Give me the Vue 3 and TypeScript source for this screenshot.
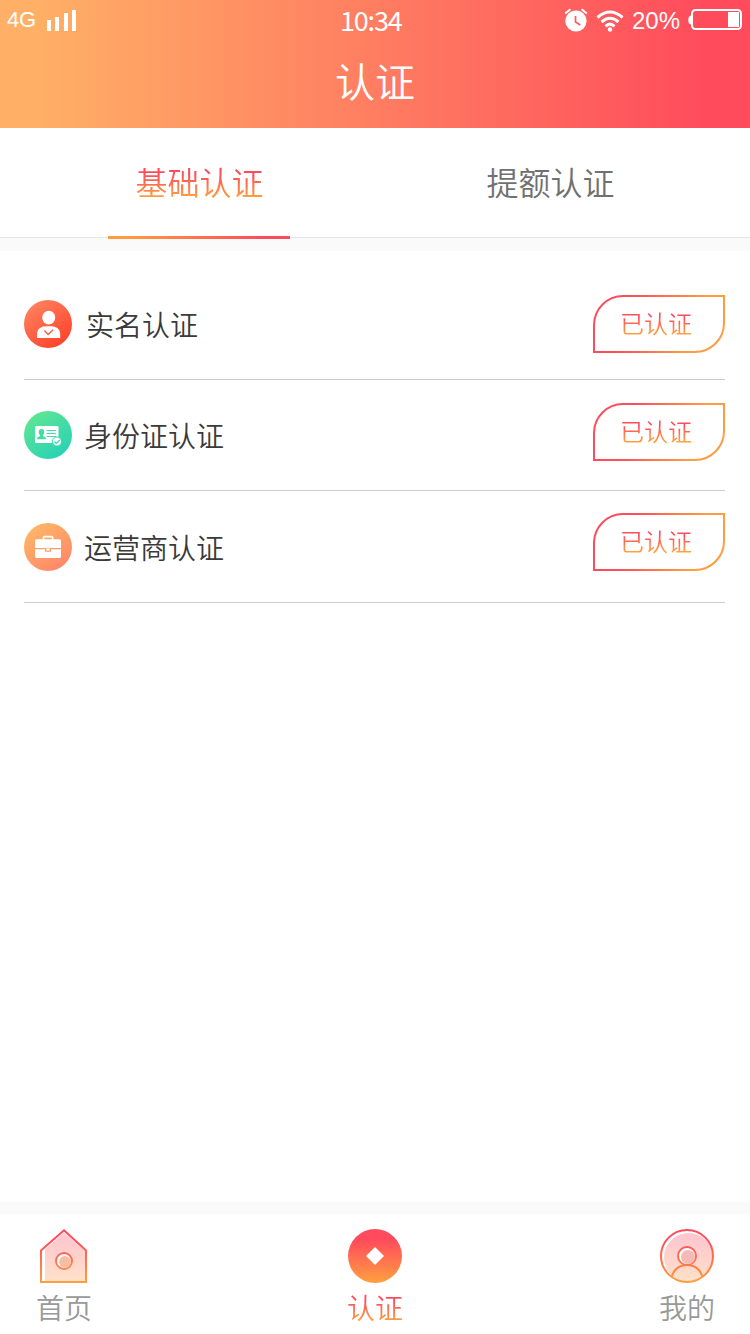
<script setup lang="ts">
interface Tab { label: string; active: boolean }
interface Item { kind: 'person' | 'card' | 'case'; label: string; status: string }

const tabs: Tab[] = [
  { label: '基础认证', active: true },
  { label: '提额认证', active: false },
]
const items: Item[] = [
  { kind: 'person', label: '实名认证', status: '已认证' },
  { kind: 'card', label: '身份证认证', status: '已认证' },
  { kind: 'case', label: '运营商认证', status: '已认证' },
]
</script>

<template>
  <div class="screen">
    <svg class="defs" width="0" height="0" aria-hidden="true">
      <defs>
        <linearGradient id="warm" x1="0" y1="0" x2="0" y2="54" gradientUnits="userSpaceOnUse">
          <stop offset="0.2" stop-color="#ff4b5c" /><stop offset="1" stop-color="#ffa03f" />
        </linearGradient>
        <linearGradient id="pale" x1="0" y1="0" x2="0" y2="54" gradientUnits="userSpaceOnUse">
          <stop offset="0.2" stop-color="#ffc8cf" /><stop offset="1" stop-color="#ffe2c8" />
        </linearGradient>
        <linearGradient id="outline" x1="0" y1="0" x2="1" y2="0.15">
          <stop offset="0.3" stop-color="#ff4b5c" /><stop offset="0.85" stop-color="#ff9c40" />
        </linearGradient>
        <linearGradient id="red" x1="0" y1="0" x2="0.7" y2="1">
          <stop offset="0" stop-color="#ff8a65" /><stop offset="1" stop-color="#ff432c" />
        </linearGradient>
        <linearGradient id="green" x1="0.1" y1="0" x2="0.8" y2="1">
          <stop offset="0" stop-color="#63e790" /><stop offset="1" stop-color="#25d1b7" />
        </linearGradient>
        <linearGradient id="orange" x1="0.1" y1="0" x2="0.8" y2="1">
          <stop offset="0" stop-color="#ffbb67" /><stop offset="1" stop-color="#ff8568" />
        </linearGradient>
      </defs>
    </svg>

    <header class="header">
      <div class="status">
        <span class="net">4G</span>
        <svg class="signal" width="30" height="22" viewBox="0 0 30 22" fill="#fff">
          <path d="M0 10h4v11H0zM8 7h4v14H8zM17 3h4v18h-4zM25 0h4v21h-4z" />
        </svg>
        <span class="time">10:34</span>
        <svg class="alarm" width="24" height="24" viewBox="0 0 24 24" fill="none">
          <circle cx="12" cy="13" r="10.6" fill="#fff" />
          <path d="M1.2 5.6 6.4 1.3M17.600 1.300 22.800 5.600" stroke="#fff" stroke-width="2" />
          <path d="M11.500 8v6l4.800 3" stroke="#ff5b5d" stroke-width="1.700" />
        </svg>
        <svg class="wifi" width="28" height="24" viewBox="0 0 28 24" fill="none" stroke="#fff" stroke-width="3">
          <path d="M1.500 8.500Q14-2.500 26.500 8.500M5.600 13Q14 5.600 22.400 13M9.500 17.300Q14 13 18.500 17.300" />
          <circle cx="14" cy="20.500" r="2.200" fill="#fff" stroke="none" />
        </svg>
        <span class="percent">20%</span>
        <svg class="battery" width="54" height="22" viewBox="0 0 54 22">
          <rect x="4" y="1" width="49" height="19" rx="3.500" fill="none" stroke="#fff" stroke-width="2" />
          <path d="M3.500 6.500Q.3 6.500.3 11t3.200 4.500z" fill="#fff" />
          <rect x="40" y="3" width="11" height="15" fill="#fff" />
        </svg>
      </div>
      <h1 class="title">认证</h1>
    </header>

    <nav class="tabs">
      <div v-for="tab in tabs" :key="tab.label" class="tab" :class="{ active: tab.active }">
        <span class="tab-label">{{ tab.label }}</span>
      </div>
    </nav>
    <div class="band top-band"></div>

    <main class="list">
      <div v-for="item in items" :key="item.kind" class="row" :class="item.kind">
        <svg class="icon" width="48" height="48" viewBox="0 0 48 48">
          <template v-if="item.kind === 'person'">
            <circle cx="24" cy="24" r="24" fill="url(#red)" />
            <ellipse cx="24.700" cy="17.700" rx="6.500" ry="6.900" fill="#fff" />
            <path d="M13 38v-4c0-5 4-7.800 8.500-7.800h6c4.700 0 8.700 2.800 8.700 7.800v4z" fill="#fff" />
            <path d="m20.300 30.500 3.800 4 5-4.700" fill="none" stroke="#ff5c40" stroke-width="1.400" />
          </template>
          <template v-else-if="item.kind === 'card'">
            <circle cx="24" cy="24" r="24" fill="url(#green)" />
            <rect x="11" y="15" width="23.500" height="17" rx="1.200" fill="#fff" />
            <path d="M17.500 18c3.600 0 3.200 4.800 1.500 6.300v1c1.800.3 3 1 3 2.900h-9c0-1.900 1.200-2.600 3-2.900v-1c-1.700-1.500-2.100-6.300 1.500-6.300z" fill="#45dca1" />
            <path d="M22.500 19.500H32M22.500 22.500H32M22.500 25.500H32" stroke="#45dca1" stroke-width="1.100" />
            <circle cx="33" cy="30.500" r="4.500" fill="#fff" stroke="#36d7ae" stroke-width="1" />
            <path d="m30.500 30.500 1.800 1.800 3.500-3.500" fill="none" stroke="#36d7ae" stroke-width="1.200" />
          </template>
          <template v-else>
            <circle cx="24" cy="24" r="24" fill="url(#orange)" />
            <path d="M19.500 17v-2.500q0-.8.800-.8h7.500q.8 0 .8.800V17" fill="none" stroke="#fff" stroke-width="1.700" />
            <path d="M12.500 16.300h23q1.500 0 1.500 1.500V25H11v-7.200q0-1.500 1.500-1.500zM11 26.200h10v2.500h6v-2.500h10v7.300q0 1.500-1.500 1.500h-23q-1.500 0-1.500-1.500z" fill="#fff" />
            <path d="M22.300 25.500h3.400v2h-3.400z" fill="#fff" />
          </template>
        </svg>
        <span class="name">{{ item.label }}</span>
        <div class="badge">
          <svg class="shape" width="132" height="58" viewBox="0 0 132 58">
            <path d="M1 57V30A29 29 0 0 1 30 1H131V28A29 29 0 0 1 102 57Z" fill="none" stroke="url(#outline)" stroke-width="2" />
          </svg>
          <span class="badge-text">{{ item.status }}</span>
        </div>
      </div>
    </main>

    <div class="band"></div>
    <footer class="bottom">
      <div class="nav home">
        <svg width="54" height="54" viewBox="0 0 54 54">
          <path d="M8 52V20.500L27 3.500l21 18.700V52z" fill="url(#pale)" />
          <path d="M4 53V21.500L27 1.300l22 20.200V53z" fill="none" stroke="url(#warm)" stroke-width="2" />
          <circle cx="27" cy="32" r="8" fill="#fff" stroke="url(#warm)" stroke-width="2" />
          <circle cx="28" cy="33" r="6" fill="#f6bda3" />
        </svg>
        <span class="nav-label">首页</span>
      </div>
      <div class="nav current">
        <svg width="54" height="54" viewBox="0 0 54 54">
          <circle cx="27" cy="27" r="27" fill="url(#warm)" />
          <path d="m27 18 9 9-9 9-9-9z" fill="#fff" />
        </svg>
        <span class="nav-label">认证</span>
      </div>
      <div class="nav mine">
        <svg width="54" height="54" viewBox="0 0 54 54">
          <circle cx="28.500" cy="28.500" r="24.500" fill="url(#pale)" />
          <circle cx="27" cy="27" r="26" fill="none" stroke="url(#warm)" stroke-width="2" />
          <circle cx="27" cy="27" r="9" fill="#fff" stroke="url(#warm)" stroke-width="2" />
          <circle cx="28" cy="28" r="7" fill="#f4bab8" />
          <path d="M11.500 48C14 40 20 36 27 36s13 4 15.500 12" fill="none" stroke="url(#warm)" stroke-width="2" />
        </svg>
        <span class="nav-label">我的</span>
      </div>
    </footer>
  </div>
</template>

<style>
body { margin: 0; background: #fff; }
</style>

<style scoped>
.screen {
  width: 750px;
  height: 1334px;
  display: flex;
  flex-direction: column;
  overflow: hidden;
  background: #fff;
  font-family: "Noto Sans CJK SC", sans-serif;
  font-weight: 350;
}
.defs { position: absolute; }
svg { display: block; flex: none; }
.header {
  height: 128px;
  background: linear-gradient(90deg, #ffaf66 5%, #ff4b5c 95%);
  color: #fff;
}
.status { height: 40px; display: flex; align-items: flex-start; white-space: nowrap; }
.net { width: 40px; padding-left: 7px; box-sizing: border-box; font: 22px/24px "Liberation Sans", sans-serif; letter-spacing: -0.2px; margin-top: 8px; }
.signal { margin: 10px 0 0 7px; }
.time { width: 64px; margin: 5px 0 0 263px; font-size: 27px; line-height: 30px; font-weight: 400; letter-spacing: -1.2px; }
.alarm { margin: 8px 0 0 160px; }
.wifi { margin: 9px 0 0 8px; }
.percent { width: 48px; margin: 7px 0 0 8px; font: 24px/28px "Liberation Sans", sans-serif; }
.battery { margin: 9px 0 0 8px; }
.title { margin: 10px 0 0; font-size: 40px; line-height: 60px; font-weight: 350; text-align: center; }
.tabs { height: 109px; display: flex; border-bottom: 1px solid #e5e5e5; padding: 0 24px; }
.tab { flex: 1; height: 111px; display: flex; justify-content: center; position: relative; }
.tab-label { font-size: 32px; line-height: 48px; height: 48px; margin-top: 29px; color: #707070; }
.active .tab-label {
  background: linear-gradient(#ff4b5c 35%, #ffa03f 84%);
  -webkit-background-clip: text;
  background-clip: text;
  color: transparent;
}
.active::after {
  content: "";
  position: absolute;
  bottom: 0;
  left: 84px;
  width: 182px;
  height: 3px;
  background: linear-gradient(90deg, #ff9c40 10%, #ff4b5c 85%);
}
.band { height: 12px; background: #fafafa; flex: none; }
.top-band { height: 13px; }
.list { flex: 1; padding: 18px 25px 0 24px; }
.row { height: 110px; display: flex; align-items: flex-start; border-bottom: 1px solid #ccc; }
.icon { margin-top: 31px; }
.name { flex: 1; margin: 34px 0 0 12px; font-size: 28px; line-height: 42px; color: #3a3a3a; }
.person .name { margin-left: 14px; }
.badge { width: 132px; height: 58px; margin-top: 26px; display: grid; }
.shape, .badge-text { grid-area: 1 / 1; }
.badge-text {
  align-self: start;
  justify-self: center;
  margin: 10px 6px 0 0;
  font-size: 24px;
  line-height: 36px;
  background: linear-gradient(#ff4b5c 35%, #ffa03f 80%);
  -webkit-background-clip: text;
  background-clip: text;
  color: transparent;
}
.card .badge { margin-top: 23px; }
.case { height: 111px; }
.case .icon { margin-top: 32px; }
.case .name { margin-top: 35px; }
.case .badge { margin-top: 22px; }
.bottom { height: 120px; display: flex; justify-content: space-between; padding: 0 35px 0 36px; box-sizing: border-box; }
.nav { width: 56px; padding-top: 15px; display: flex; flex-direction: column; align-items: center; }
.current { margin-right: 1px; }
.nav-label { margin-top: 3px; font-size: 28px; line-height: 42px; color: #999; }
.current .nav-label {
  background: linear-gradient(#ff4b5c 35%, #ffa03f 84%);
  -webkit-background-clip: text;
  background-clip: text;
  color: transparent;
}
</style>
